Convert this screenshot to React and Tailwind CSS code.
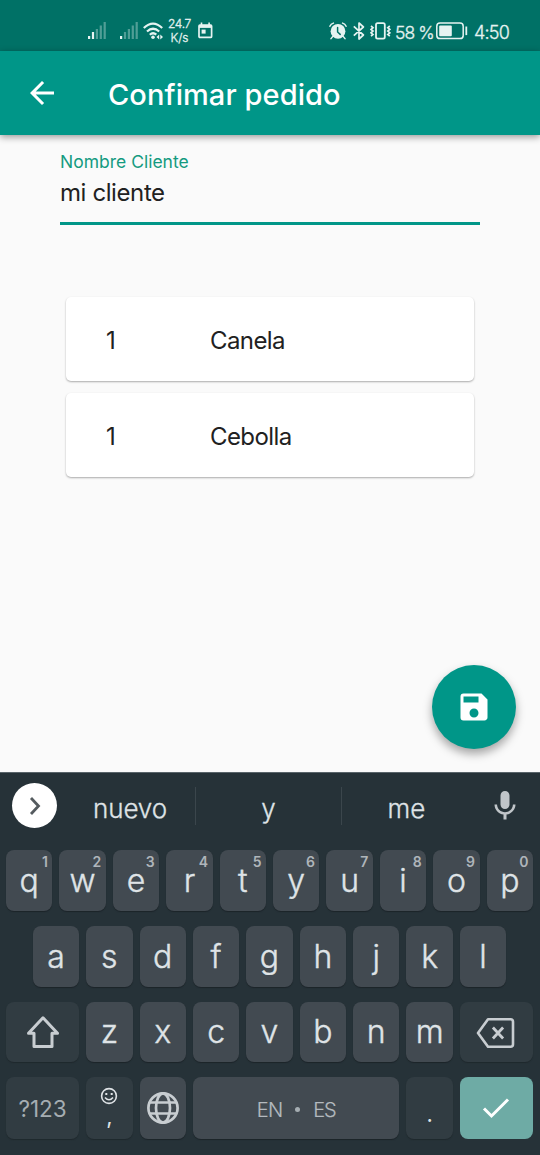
import { MdArrowBack, MdSave, MdMic } from "react-icons/md";

function SignalIcon({ lit }) {
  const bars = [3, 7, 10, 13.5, 17];
  return (
    <svg width="19" height="18" viewBox="0 0 19 18" fill="#e6f3f1">
      {bars.map((h, i) => (
        <rect key={h} x={i * 3.9} y={17 - h} width="2.2" height={h} opacity={i < lit ? 1 : 0.35} />
      ))}
    </svg>
  );
}

function WifiIcon() {
  return (
    <svg width="21" height="18" viewBox="0 0 21 18" fill="none" stroke="#e6f3f1" strokeWidth="2.2">
      <path d="M0.8 6Q10 -2.8 19.2 6M4 9.5Q10 4 16.2 9.5M6.8 12.7Q10 9.8 13.3 12.7" />
      <circle cx="10" cy="15.3" r="1.8" fill="#e6f3f1" stroke="none" />
      <path d="M16.2 12.4v5l-2.7-2.5zM17.3 12.4v5l2.7-2.5z" fill="#e6f3f1" stroke="none" />
    </svg>
  );
}

function CalendarIcon() {
  return (
    <svg width="15" height="17" viewBox="0 0 15 17" fill="none" stroke="#e6f3f1">
      <rect x="1" y="3" width="12.6" height="12.4" rx="1" strokeWidth="1.7" />
      <path d="M1 4.4h12.6" strokeWidth="3" />
      <path d="M3.5 0.5v3M11.1 0.5v3" strokeWidth="1.6" />
      <rect x="3.6" y="7.6" width="4" height="4" fill="#e6f3f1" stroke="none" />
    </svg>
  );
}

function AlarmIcon() {
  return (
    <svg width="18" height="18" viewBox="0 0 18 18" fill="none" stroke="#e6f3f1" strokeLinecap="round">
      <circle cx="9" cy="9.3" r="7.4" fill="#e6f3f1" stroke="none" />
      <path d="M0.9 4.2Q1.9 1.8 4.4 1.1M17.1 4.2Q16.1 1.8 13.6 1.1M3.6 14.6L2 16.6M14.4 14.6L16 16.6" strokeWidth="1.5" />
      <path d="M8.6 5.6v4.4l2.6 2.4" stroke="#007166" strokeWidth="1.5" />
    </svg>
  );
}

function BluetoothIcon() {
  return (
    <svg width="12" height="18" viewBox="0 0 12 18" fill="none" stroke="#e6f3f1" strokeWidth="1.7" strokeLinejoin="round">
      <path d="M0.8 4.3L10.4 13L6 17V1L10.4 5L0.8 13.7" />
    </svg>
  );
}

function VibrateIcon() {
  return (
    <svg width="21" height="18" viewBox="0 0 21 18" fill="none" stroke="#e6f3f1">
      <rect x="6" y="1.2" width="8.8" height="15.4" rx="1.6" strokeWidth="1.8" />
      <path d="M1 4l2 1.7-2 1.7 2 1.7-2 1.7 2 1.7-2 1.7M19.8 4l-2 1.7 2 1.7-2 1.7 2 1.7-2 1.7 2 1.7" strokeWidth="1.7" />
    </svg>
  );
}

function BatteryIcon() {
  return (
    <svg width="32" height="18" viewBox="0 0 32 18" fill="none" stroke="#e6f3f1">
      <rect x="0.8" y="1" width="26.4" height="15.6" rx="3.2" strokeWidth="1.5" />
      <rect x="3.2" y="3.6" width="12.6" height="10.6" rx="1" fill="#e6f3f1" stroke="none" />
      <path d="M30.3 4.5v8.6" strokeWidth="1.8" />
    </svg>
  );
}

function StatusBar() {
  return (
    <div className="flex h-[51px] items-start bg-[#007166] pt-[22px] pr-[30px] pl-[88px] text-[#e6f3f1]">
      <SignalIcon lit={2} />
      <div className="ml-[13px]"><SignalIcon lit={1} /></div>
      <div className="ml-[4px]"><WifiIcon /></div>
      <div className="-mt-[5px] ml-[3px] w-[25px] text-center text-[12px] leading-[14px] font-light whitespace-nowrap [-webkit-text-stroke:0.3px]">
        <div className="tracking-[-0.3px]">24.7</div>
        <div>K/s</div>
      </div>
      <div className="ml-[6px]"><CalendarIcon /></div>
      <div className="ml-auto flex items-start">
        <AlarmIcon />
        <div className="ml-[6px]"><BluetoothIcon /></div>
        <div className="ml-[5px]"><VibrateIcon /></div>
        <span className="mt-px ml-[4px] w-[42px] text-[17.5px] leading-[20px] font-light tracking-[-0.9px] whitespace-nowrap [-webkit-text-stroke:0.3px]">58 %</span>
        <div className="-ml-px"><BatteryIcon /></div>
        <span className="mt-px ml-[6px] w-[36px] text-[18px] leading-[20px] font-light tracking-[-0.8px] whitespace-nowrap [-webkit-text-stroke:0.3px]">4:50</span>
      </div>
    </div>
  );
}

function OrderCard({ quantity, name }) {
  return (
    <div className="flex h-[84px] items-center rounded-[5px] bg-white pt-[3px] pl-[40px] text-[24px] text-[#212121] shadow-[0_1px_2px_rgba(0,0,0,0.32)]">
      <span className="w-[104px]">{quantity}</span>
      <span className="tracking-[-0.6px]">{name}</span>
    </div>
  );
}

function Key({ label, hint }) {
  return (
    <div className="relative flex h-full w-[46.4px] shrink-0 items-center justify-center rounded-[8px] bg-[#424a51] pt-px text-[32px] leading-[32px] font-light shadow-[0_1px_1px_#1c2429] [-webkit-text-stroke:0.4px]">
      {label}
      {hint && <span className="absolute top-[4px] right-[4.5px] text-[14px] leading-[15px] font-semibold text-[#afb5ba] [-webkit-text-stroke:0px]">{hint}</span>}
    </div>
  );
}

const darkKey = "flex h-full shrink-0 items-center justify-center rounded-[8px] bg-[#313c42] shadow-[0_1px_1px_#1f282d]";

function Keyboard() {
  return (
    <div className="flex h-[383px] flex-col border-t border-[#59646a] bg-[#263238] pr-px text-[#dfe3e6]">
      <div className="flex h-[65px] items-center text-[26px] font-light [-webkit-text-stroke:0.3px]">
        <div className="ml-[12px] flex size-[45px] items-center justify-center rounded-full bg-white">
          <svg width="14" height="20" viewBox="0 0 14 20" fill="none" stroke="#555b5f" strokeWidth="2.8">
            <path d="M3 2l7.5 8L3 18" />
          </svg>
        </div>
        <div className="w-[138px] pt-[5px] pl-[8px] text-center tracking-[-0.1px]">nuevo</div>
        <div className="h-[38px] w-px bg-[#3b464c]" />
        <div className="w-[145px] pt-[5px] text-center">y</div>
        <div className="h-[38px] w-px bg-[#3b464c]" />
        <div className="w-[129px] pt-[5px] text-center">me</div>
        <MdMic className="ml-[16px] size-[36px] text-[#c0c5c9]" />
      </div>
      <div className="mt-[12px] flex h-[61px] justify-center gap-[7px]">
        {[..."qwertyuiop"].map((c, i) => <Key key={c} label={c} hint={String((i + 1) % 10)} />)}
      </div>
      <div className="mt-[15px] flex h-[60.5px] justify-center gap-[7px]">
        {[..."asdfghjkl"].map((c) => <Key key={c} label={c} />)}
      </div>
      <div className="mt-[15px] flex h-[60.5px] justify-center gap-[7px]">
        <div className={`${darkKey} w-[73.1px]`}>
          <svg width="36" height="34" viewBox="0 0 36 34" fill="none" stroke="#c8cdd1" strokeWidth="3" strokeLinejoin="round">
            <path d="M18 2.8L32.5 18.3H27V31.5H9V18.3H3.5Z" />
          </svg>
        </div>
        {[..."zxcvbnm"].map((c) => <Key key={c} label={c} />)}
        <div className={`${darkKey} w-[73.1px]`}>
          <svg width="40" height="32" viewBox="0 0 40 32" className="mt-[3px]" fill="none" stroke="#c8cdd1" strokeWidth="2.6" strokeLinejoin="round">
            <path d="M12 2.2H34.5Q37 2.2 37 4.7V27.3Q37 29.8 34.5 29.8H12L2 16Z" />
            <path d="M16.9 10.5L27.1 21.5M27.1 10.5L16.9 21.5" strokeWidth="2.8" />
          </svg>
        </div>
      </div>
      <div className="mt-[15px] flex h-[62px] justify-center gap-[7px]">
        <div className={`${darkKey} w-[73.1px] pt-[2px] text-[22.5px] text-[#a5adb2]`}>?123</div>
        <div className={`${darkKey} w-[46.4px] flex-col`}>
          <svg width="18" height="18" viewBox="0 0 18 18" className="-mt-[3px]" fill="none" stroke="#dfe3e6" strokeWidth="1.6">
            <circle cx="9" cy="9" r="7.4" />
            <path d="M5 10.5Q9 15 13 10.5" />
            <path d="M5.3 7h2M10.7 7h2" strokeWidth="2" />
          </svg>
          <span className="h-[22px] text-[22px] leading-[22px]">,</span>
        </div>
        <div className="flex h-full w-[46.4px] shrink-0 items-center justify-center rounded-[8px] bg-[#424a51] shadow-[0_1px_1px_#1c2429]">
          <svg width="34" height="34" viewBox="0 0 34 34" fill="none" stroke="#c8cdd1" strokeWidth="2.7">
            <circle cx="17" cy="17" r="14.6" />
            <ellipse cx="17" cy="17" rx="7" ry="14.6" />
            <path d="M4 11.5H30M4 22.5H30" />
          </svg>
        </div>
        <div className="flex h-full w-[206.6px] shrink-0 items-center justify-center gap-[13px] rounded-[8px] bg-[#424a51] pt-[3px] text-[20px] font-light text-[#b4babf] shadow-[0_1px_1px_#1c2429] [-webkit-text-stroke:0.2px]">
          <span className="tracking-[-0.8px]">EN</span>
          <span className="size-[5px] rounded-full bg-[#a5adb2]" />
          <span className="tracking-[-1.2px]">ES</span>
        </div>
        <div className={`${darkKey} w-[46.4px] pt-[12px] text-[22px]`}>.</div>
        <div className="flex h-full w-[73.1px] shrink-0 items-center justify-center rounded-[8px] bg-[#6eaba5]">
          <svg width="28" height="22" viewBox="0 0 28 22" fill="none" stroke="#fff" strokeWidth="3">
            <path d="M2 11.5L9.5 19L26 2.5" />
          </svg>
        </div>
      </div>
    </div>
  );
}

export default function App() {
  return (
    <div className="flex h-[1155px] w-[540px] flex-col overflow-hidden bg-[#fafafa] font-['Inter',sans-serif]">
      <StatusBar />
      <header className="relative flex h-[84px] items-center bg-[#009688] pl-[24px] text-white shadow-[0_2px_7px_rgba(0,0,0,0.4)]">
        <MdArrowBack className="size-[36px]" />
        <h1 className="ml-[48px] pt-[4px] text-[29px] font-medium tracking-[0.08px] whitespace-nowrap">Confimar pedido</h1>
      </header>
      <main className="flex flex-1 flex-col px-[60px] pt-[16px]">
        <label className="text-[17.5px] leading-[21px] text-[#149a80]">Nombre Cliente</label>
        <div className="mt-[5px] h-[48px] border-b-[3px] border-[#009688] pt-px text-[24px] leading-[30px] tracking-[-0.4px] text-[#212121]">mi cliente</div>
        <div className="mt-[72px] flex flex-col gap-[12px] px-[6px]">
          <OrderCard quantity="1" name="Canela" />
          <OrderCard quantity="1" name="Cebolla" />
        </div>
        <button className="mt-auto -mr-[36px] mb-[23.5px] flex size-[84px] items-center justify-center self-end rounded-full bg-[#009688] text-white shadow-[0_5px_10px_rgba(0,0,0,0.35)]">
          <MdSave className="size-[36px]" />
        </button>
      </main>
      <Keyboard />
    </div>
  );
}
